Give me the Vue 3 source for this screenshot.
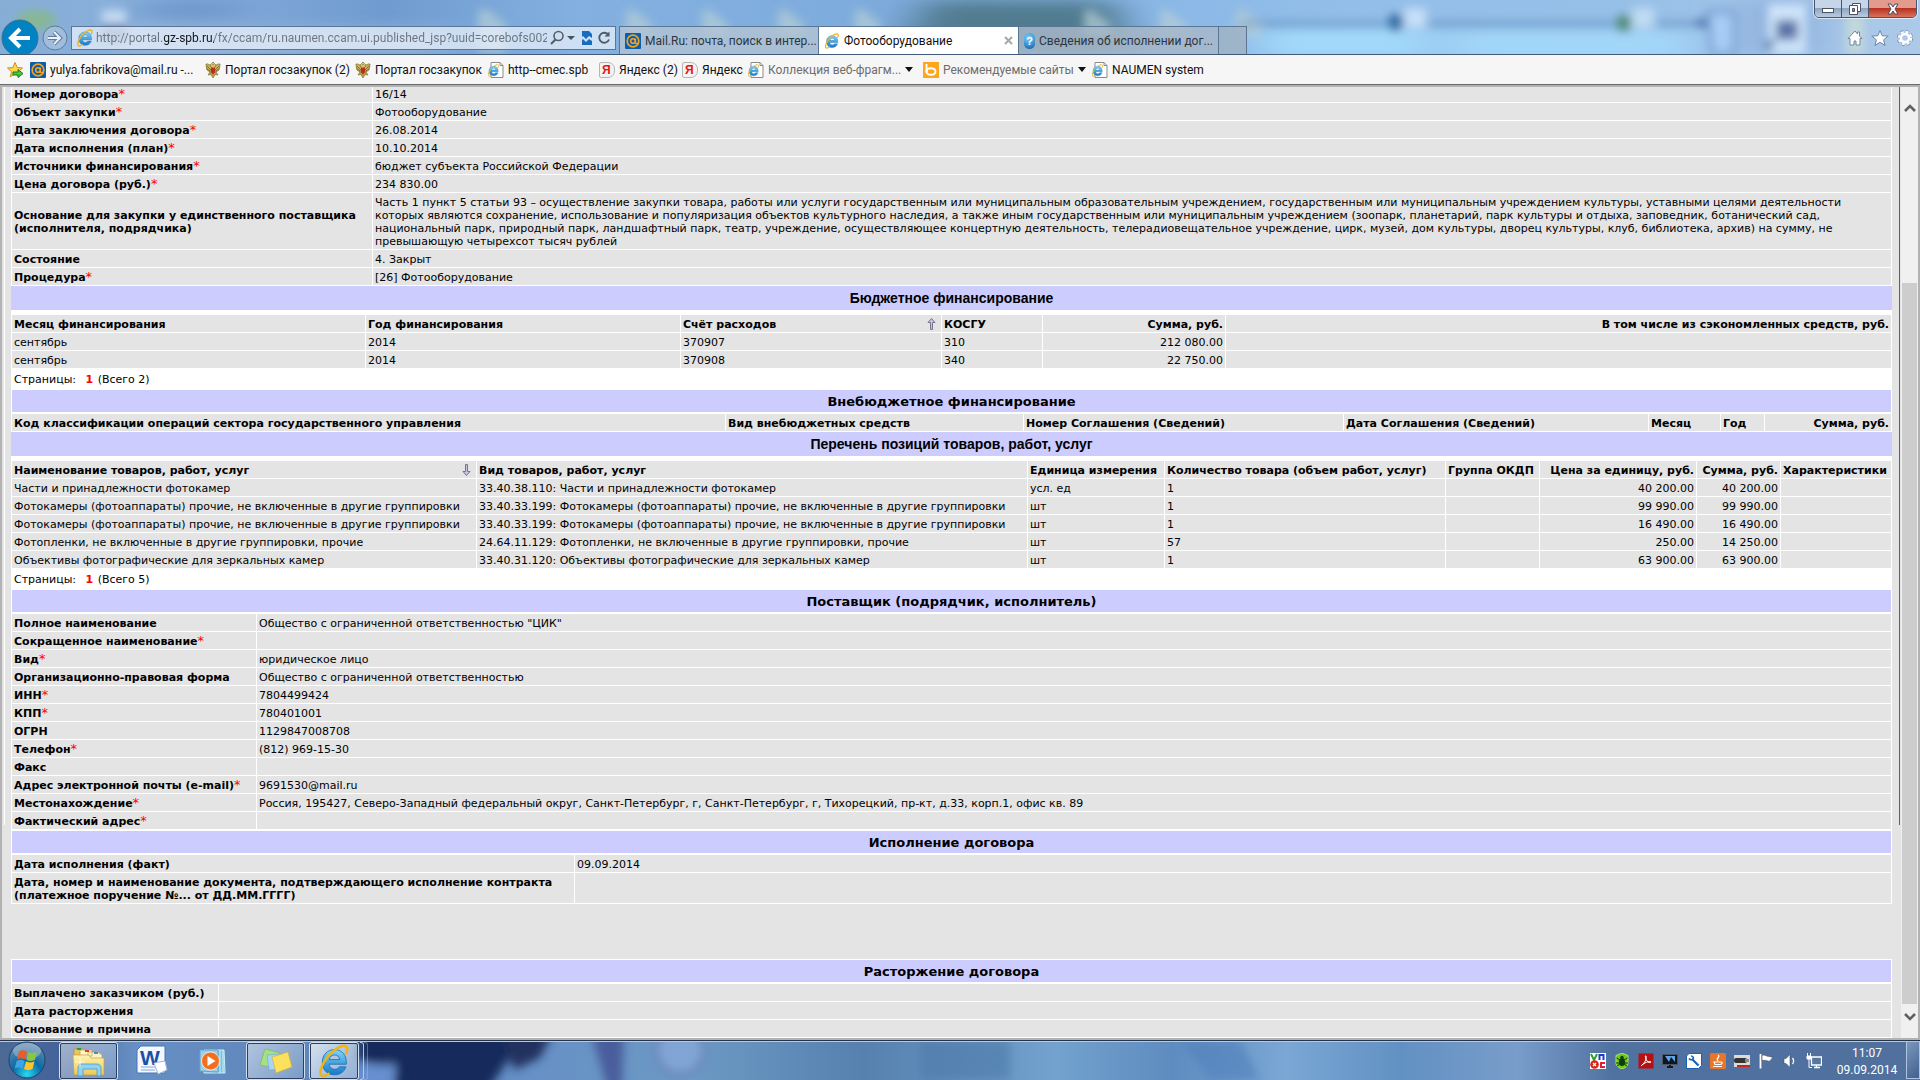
<script setup>
const url = 'http://portal.gz-spb.ru/fx/ccam/ru.naumen.ccam.ui.published_jsp?uuid=corebofs002'

const favorites = [
  { icon: 'mail', text: 'yulya.fabrikova@mail.ru -...' },
  { icon: 'crest', text: 'Портал госзакупок (2)' },
  { icon: 'crest', text: 'Портал госзакупок' },
  { icon: 'iepage', text: 'http--cmec.spb' },
  { icon: 'yandex', text: 'Яндекс (2)' },
  { icon: 'yandex', text: 'Яндекс' },
  { icon: 'iepage', text: 'Коллекция веб-фрагм...', menu: true },
  { icon: 'bing', text: 'Рекомендуемые сайты', menu: true },
  { icon: 'iepage', text: 'NAUMEN system' }
]

const contract = [
  ['Номер договора', true, '16/14'],
  ['Объект закупки', true, 'Фотооборудование'],
  ['Дата заключения договора', true, '26.08.2014'],
  ['Дата исполнения (план)', true, '10.10.2014'],
  ['Источники финансирования', true, 'бюджет субъекта Российской Федерации'],
  ['Цена договора (руб.)', true, '234 830.00'],
  ['Основание для закупки у единственного поставщика\n(исполнителя, подрядчика)', false,
    'Часть 1 пункт 5 статьи 93 – осуществление закупки товара, работы или услуги государственным или муниципальным образовательным учреждением, государственным или муниципальным учреждением культуры, уставными целями деятельности\nкоторых являются сохранение, использование и популяризация объектов культурного наследия, а также иным государственным или муниципальным учреждением (зоопарк, планетарий, парк культуры и отдыха, заповедник, ботанический сад,\nнациональный парк, природный парк, ландшафтный парк, театр, учреждение, осуществляющее концертную деятельность, телерадиовещательное учреждение, цирк, музей, дом культуры, дворец культуры, клуб, библиотека, архив) на сумму, не\nпревышающую четырехсот тысяч рублей'],
  ['Состояние', false, '4. Закрыт'],
  ['Процедура', true, '[26] Фотооборудование']
]

const budget = [
  ['сентябрь', '2014', '370907', '310', '212 080.00', ''],
  ['сентябрь', '2014', '370908', '340', '22 750.00', '']
]

const camera = 'Фотокамеры (фотоаппараты) прочие, не включенные в другие группировки'
const items = [
  ['Части и принадлежности фотокамер', '33.40.38.110: Части и принадлежности фотокамер', 'усл. ед', '1', '', '40 200.00', '40 200.00', ''],
  [camera, '33.40.33.199: ' + camera, 'шт', '1', '', '99 990.00', '99 990.00', ''],
  [camera, '33.40.33.199: ' + camera, 'шт', '1', '', '16 490.00', '16 490.00', ''],
  ['Фотопленки, не включенные в другие группировки, прочие', '24.64.11.129: Фотопленки, не включенные в другие группировки, прочие', 'шт', '57', '', '250.00', '14 250.00', ''],
  ['Объективы фотографические для зеркальных камер', '33.40.31.120: Объективы фотографические для зеркальных камер', 'шт', '1', '', '63 900.00', '63 900.00', '']
]

const supplier = [
  ['Полное наименование', false, 'Общество с ограниченной ответственностью "ЦИК"'],
  ['Сокращенное наименование', true, ''],
  ['Вид', true, 'юридическое лицо'],
  ['Организационно-правовая форма', false, 'Общество с ограниченной ответственностью'],
  ['ИНН', true, '7804499424'],
  ['КПП', true, '780401001'],
  ['ОГРН', false, '1129847008708'],
  ['Телефон', true, '(812) 969-15-30'],
  ['Факс', false, ''],
  ['Адрес электронной почты (e-mail)', true, '9691530@mail.ru'],
  ['Местонахождение', true, 'Россия, 195427, Северо-Западный федеральный округ, Санкт-Петербург, г, Санкт-Петербург, г, Тихорецкий, пр-кт, д.33, корп.1, офис кв. 89'],
  ['Фактический адрес', true, '']
]

const execution = [
  ['Дата исполнения (факт)', false, '09.09.2014'],
  ['Дата, номер и наименование документа, подтверждающего исполнение контракта\n(платежное поручение №... от ДД.ММ.ГГГГ)', false, '']
]

const termination = [
  ['Выплачено заказчиком (руб.)', false, ''],
  ['Дата расторжения', false, ''],
  ['Основание и причина', false, '']
]

const tray = ['vnc', 'spider', 'adobe', 'monitor', 'wrench', 'java', 'usb', 'flag', 'sound', 'network']
</script>

<template>
  <svg class="defs" aria-hidden="true">
    <defs>
      <linearGradient id="ieg" x1="0" y1="0" x2="0" y2="1">
        <stop offset="0" stop-color="#7fd6f7" /><stop offset="1" stop-color="#1579c8" />
      </linearGradient>
      <linearGradient id="folderg" x1="0" y1="0" x2="0" y2="1">
        <stop offset="0" stop-color="#fff3b0" /><stop offset="1" stop-color="#ecc95a" />
      </linearGradient>
      <radialGradient id="orbg" cx=".5" cy=".9" r=".9">
        <stop offset="0" stop-color="#29d8f5" /><stop offset=".45" stop-color="#0d6aa6" /><stop offset="1" stop-color="#6b8fae" />
      </radialGradient>
    </defs>
    <symbol id="ie" viewBox="0 0 32 32">
      <path d="M27.600 19H11.500c.4 3 2.300 4.800 5.200 4.800 2 0 3.500-.8 4.300-2.300h6.200C25.600 26.400 21.700 29 16.500 29 9.700 29 5 24.200 5 17.300 5 10.200 9.700 5.300 16.500 5.300c7 0 11.500 4.900 11.100 13.700zM11.600 14.700h9.700c-.3-2.800-2-4.400-4.700-4.400s-4.500 1.600-5 4.400z" fill="url(#ieg)" stroke="#1b6fb5" stroke-width=".8" />
      <path d="M27 9.500c2.200-4.200 2-7.300-.6-7.700C21.600 1 12 8 6.700 16.800 3 23 2 28.600 4.600 29.900c1.700.8 4.400-.3 7.100-2.300" fill="none" stroke="#f0b414" stroke-width="2.400" />
    </symbol>
    <symbol id="iepage" viewBox="0 0 16 16">
      <path d="M3 .5h9l3 3v12H3z" fill="#fff" stroke="#8b8b8b" /><path d="M12 .5v3h3" fill="none" stroke="#8b8b8b" />
      <use href="#ie" x="-1" y="2" width="13" height="13" />
    </symbol>
    <symbol id="mail" viewBox="0 0 16 16">
      <rect width="16" height="16" rx="1" fill="#0b5ea9" />
      <circle cx="8" cy="8" r="5.800" fill="none" stroke="#f5a11c" stroke-width="1.700" />
      <circle cx="8" cy="8" r="2.300" fill="none" stroke="#f5a11c" stroke-width="1.600" /><path d="M10.400 5.500v4c0 1.500 2.600 1.400 3 0" fill="none" stroke="#f5a11c" stroke-width="1.400" />
    </symbol>
    <symbol id="crest" viewBox="0 0 16 16">
      <path d="M7 6C6 3 3 1.500 1 2c.3 2 .2 4 1 6l3 2zM9 6c1-3 4-4.500 6-4-.3 2-.2 4-1 6l-3 2z" fill="#c9b25a" stroke="#77652a" stroke-width=".7" />
      <path d="M2 4l4 4M2 6.500l3 2.500M14 4l-4 4M14 6.500L11 9" stroke="#6a5824" stroke-width=".7" />
      <path d="M5 3l1.500-1.500L8 3l1.500-1.500L11 3 9.500 5.500h-3z" fill="#d9c46c" stroke="#77652a" stroke-width=".6" />
      <path d="M5 10l-2 3 3-.5L8 16l2-3.500 3 .5-2-3z" fill="#b89f48" stroke="#77652a" stroke-width=".6" />
      <path d="M6 6h4v4l-2 2.500L6 10z" fill="#c22a1e" /><path d="M7 0h2v1.500H7z" fill="#a8893a" />
    </symbol>
    <symbol id="bing" viewBox="0 0 16 16">
      <rect width="16" height="16" fill="#ffa61a" /><path d="M3.500 2v8.500" stroke="#fff" stroke-width="2" /><ellipse cx="8" cy="9.500" rx="4.500" ry="3.300" fill="none" stroke="#fff" stroke-width="2" />
    </symbol>
    <symbol id="favadd" viewBox="0 0 18 18">
      <path d="M9 1.500l2.200 5 5.300.5-4 3.600 1.200 5.200L9 13l-4.700 2.800 1.200-5.200-4-3.600 5.300-.5z" fill="#ffd64a" stroke="#c8921c" />
      <path d="M7 11h5V8.500l5 4-5 4V14H7z" fill="#4cc33a" stroke="#1f7c1e" />
    </symbol>
    <symbol id="vnc" viewBox="0 0 16 16">
      <rect width="16" height="16" fill="#fff" /><path d="M1 1l3 6 3-6" stroke="#29a329" stroke-width="2" fill="none" />
      <path d="M9.500 7V2h4v5" stroke="#2436d8" stroke-width="2" fill="none" /><path d="M15 10h-4v4h4" stroke="#d23" stroke-width="2" fill="none" />
      <circle cx="4.500" cy="11.500" r="4.300" fill="#d9231c" /><path d="M3 10l3 3m0-3l-3 3" stroke="#fff" stroke-width="1.200" />
    </symbol>
    <symbol id="spider" viewBox="0 0 16 16">
      <path d="M8 0l6 2.500V10c0 3-3 5-6 6-3-1-6-3-6-6V2.500z" fill="#6cc91c" stroke="#a9e66a" />
      <ellipse cx="8" cy="9" rx="3" ry="4" fill="#123c08" /><circle cx="8" cy="4.500" r="1.700" fill="#123c08" /><path d="M2.500 5L6 7m-4 3h4m-3 3l3-2m7.500-6L10 7m4 3h-4m3 3l-3-2" stroke="#123c08" />
    </symbol>
    <symbol id="adobe" viewBox="0 0 16 16">
      <rect width="15" height="15" x=".5" y=".5" fill="#b80f10" /><path d="M3 13c3-2 6-7 5-10-1-1-1 2 1 5 1.500 2 4 2 4 1s-5-.5-9 3" fill="none" stroke="#fff" />
    </symbol>
    <symbol id="monitor" viewBox="0 0 16 16">
      <rect x=".5" y="1.500" width="15" height="10" fill="#10161f" stroke="#4a5666" /><path d="M3 3l4 6 2-5 4 5V3" fill="#5fa4e6" /><path d="M5 14h6M8 12v2" stroke="#181818" stroke-width="2" />
    </symbol>
    <symbol id="wrench" viewBox="0 0 16 16">
      <path d="M3 .5h12.500v12l-3 3H.5V3z" fill="#fff" stroke="#1763b2" /><path d="M6 6l6.500 6.500" stroke="#1763b2" stroke-width="2.200" /><path d="M3 5.500A2.500 2.500 0 0 0 7.500 5 2.500 2.500 0 0 0 5 3" fill="none" stroke="#1763b2" stroke-width="1.600" />
    </symbol>
    <symbol id="java" viewBox="0 0 16 16">
      <rect width="16" height="16" rx="1.500" fill="#e8762a" /><path d="M8 2c3 2-3 3 0 6M4 9h7c2 0 1 2.500-1 2.500H5zM3 13.500h9" fill="none" stroke="#fff" stroke-width="1.200" />
    </symbol>
    <symbol id="usb" viewBox="0 0 16 16">
      <rect y="2" width="16" height="12" fill="#d8ddd9" /><rect x="0" y="5" width="13" height="5" rx="2" fill="#343434" /><rect x="11" y="6" width="4" height="3" fill="#888" /><path d="M3 13h13" stroke="#d41d1d" stroke-width="2" />
    </symbol>
    <symbol id="flag" viewBox="0 0 16 16">
      <path d="M2.500 1v14.500" stroke="#fff" stroke-width="1.800" /><path d="M4 2.500c3-1.500 4 1 6 .8 2 0 3 1.200 5 .7l-3 4c-2 .8-4-1.500-8-.5z" fill="#fff" stroke="#47525c" stroke-width=".6" />
    </symbol>
    <symbol id="sound" viewBox="0 0 16 16">
      <path d="M2 5.500h2L8 1.500v13l-4-4H2z" fill="#fff" stroke="#47525c" stroke-width=".6" /><path d="M10.500 5c1.500 2 1.500 4 0 6" fill="none" stroke="#fff" stroke-width="1.300" />
    </symbol>
    <symbol id="network" viewBox="0 0 16 16">
      <path d="M5.500 4h10v8h-10z" fill="#57789c" stroke="#fff" stroke-width="1.300" /><path d="M8 14.500h6M10.500 12v2" stroke="#fff" stroke-width="1.300" /><path d="M1.500 0v3m3-3v3M1 3h4v3H1z" fill="#fff" stroke="#fff" /><path d="M3 6v8.500h3" fill="none" stroke="#fff" />
    </symbol>
  </svg>

  <div class="window">
    <header class="chrome">
      <svg class="wall" viewBox="0 0 1920 54" preserveAspectRatio="none" aria-hidden="true">
        <defs>
          <filter id="soft" x="-20%" y="-50%" width="140%" height="200%"><feGaussianBlur stdDeviation="5" /></filter>
          <filter id="soft2" x="-50%" y="-80%" width="200%" height="260%"><feGaussianBlur stdDeviation="22 8" /></filter>
          <linearGradient id="sky" x1="0" x2="1" y1="0" y2="0">
            <stop offset="0" stop-color="#86add6" /><stop offset=".08" stop-color="#8ab0dc" /><stop offset=".2" stop-color="#6f9bd0" />
            <stop offset=".3" stop-color="#83b0e0" /><stop offset=".47" stop-color="#7dabdc" /><stop offset=".58" stop-color="#88b6e6" />
            <stop offset=".7" stop-color="#93bee9" /><stop offset=".85" stop-color="#97c0e8" /><stop offset="1" stop-color="#adc9e8" />
          </linearGradient>
        </defs>
        <rect width="1920" height="54" fill="url(#sky)" />
        <g filter="url(#soft2)">
          <path d="M925 0h190l20 54H900z" fill="#517b90" />
          <rect x="130" y="30" width="320" height="24" fill="#9ab6d9" />
          <rect x="1260" y="28" width="170" height="30" fill="#a3dafb" /><rect x="1450" y="30" width="240" height="30" fill="#a3d8fa" />
          <rect x="140" y="0" width="100" height="20" fill="#6d98cb" />
          <rect x="1740" y="0" width="80" height="54" fill="#91b2de" />
        </g>
        <g filter="url(#soft)">
          <ellipse cx="36" cy="20" rx="20" ry="10" fill="#86b794" /><rect x="102" y="10" width="24" height="14" fill="#c6dcf3" /><rect x="102" y="24" width="24" height="18" fill="#5e79ab" />
          <path d="M478 10h10l18 14v28h-28zM626 10h8l18 14v12h-26zM702 10h8l18 14v12h-26zM778 10h8l18 14v12h-26zM855 10h8l18 14v12h-26zM1084 10h8l18 14v12h-26zM1160 10h8l18 14v12h-26zM1236 10h8l18 14v12h-26z" fill="#b6cfd4" fill-opacity=".7" />
          <path d="M1240 22h460v3h-460z" fill="#4c7bae" />
          <circle cx="1396" cy="22" r="8" fill="#2f6aa3" /><rect x="1404" y="8" width="22" height="20" fill="#c6dff8" /><circle cx="1624" cy="23" r="8" fill="#4d8a76" /><rect x="1632" y="8" width="22" height="20" fill="#c0dcf2" />
          <path d="M1690 23l20-6v12z" fill="#4064a0" /><path d="M1708 12h26v42h-22z" fill="#a7cdf5" stroke="#6f98cb" stroke-width="4" />
          <path d="M1768 4h38v50h-38z" fill="#cfe5fa" /><path d="M1776 20h22v20h-22z" fill="#5c73a8" /><path d="M1766 40h10l-8 14z" fill="#36669e" /><path d="M1846 14h18v40h-18z" fill="#c2d8da" />
        </g>
      </svg>
      <nav class="navrow">
        <button class="back" aria-label="Назад">
          <svg width="38" height="38" viewBox="0 0 38 38"><circle cx="19" cy="19" r="18" fill="#0083c3" stroke="#3c6e93" /><path d="M29 19H11m8-9l-9 9 9 9" fill="none" stroke="#fff" stroke-width="4" /></svg>
        </button>
        <button class="fwd" aria-label="Вперед">
          <svg width="26" height="26" viewBox="0 0 26 26"><circle cx="13" cy="13" r="12" fill="#b9cce2" fill-opacity=".5" stroke="#5f7c9b" /><path d="M6 13h12m-6-6l6 6-6 6" fill="none" stroke="#5f7c9b" stroke-width="4" /><path d="M6 13h12m-6-6l6 6-6 6" fill="none" stroke="#e9f1f9" stroke-width="2" /></svg>
        </button>
        <div class="address">
          <svg width="18" height="18"><use href="#ie" /></svg>
          <input class="url" type="text" :value="url" aria-label="Адрес">
          <button aria-label="Поиск"><svg width="16" height="16" viewBox="0 0 16 16"><circle cx="9.500" cy="6" r="4.500" fill="none" stroke="#55606b" stroke-width="1.600" /><path d="M6.500 9.500L2 14" stroke="#55606b" stroke-width="2.200" /></svg></button>
          <button class="tiny" aria-label="Показать список"><svg width="8" height="16" viewBox="0 0 8 16"><path d="M0 6h8L4 10z" fill="#46525e" /></svg></button>
          <button class="compat" aria-label="Режим совместимости"><svg width="12" height="16" viewBox="0 0 12 16"><path d="M1 1h7l3 3v4l-3-2-3 3-3-3-1 1zM1 10l1-1 3 3 3-3 3 2v4H1z" fill="#1a6cc0" /></svg></button>
          <button aria-label="Обновить"><svg width="14" height="16" viewBox="0 0 14 16"><path d="M11.500 5A5 5 0 1 0 12 9.500" fill="none" stroke="#4d5964" stroke-width="1.800" /><path d="M12.500 1.500v5H7.500z" fill="#4d5964" /></svg></button>
        </div>
        <div class="tabs">
          <button class="tab"><svg width="16" height="16"><use href="#mail" /></svg><span>Mail.Ru: почта, поиск в интер...</span></button>
          <button class="tab active"><svg width="16" height="16"><use href="#ie" /></svg><span>Фотооборудование</span><svg class="close" width="9" height="9" viewBox="0 0 9 9"><path d="M1 1l7 7m0-7L1 8" stroke="#a8a8a8" stroke-width="2" /></svg></button>
          <button class="tab last"><i class="help">?</i><span>Сведения об исполнении дог...</span></button>
          <button class="tab new" aria-label="Новая вкладка"></button>
        </div>
        <div class="tools">
          <button aria-label="Домой"><svg width="16" height="16" viewBox="0 0 16 16"><path d="M8 1L1 8.500h2V15h4v-4h2v4h4V8.500h2L12.500 6V2h-2v2z" fill="#fff" stroke="#6f87a3" /></svg></button>
          <button aria-label="Избранное"><svg width="18" height="16" viewBox="0 0 18 16"><path d="M9 .5l2.200 5.300 6 .3-4.600 3.700 1.500 5.700L9 12.300l-5.100 3.200 1.500-5.700L.8 6.100l6-.3z" fill="#fff" stroke="#6f87a3" /></svg></button>
          <button aria-label="Сервис"><svg width="16" height="16" viewBox="0 0 16 16"><circle cx="8" cy="8" r="6" fill="none" stroke="#6f87a3" stroke-width="4" stroke-dasharray="2.700 2" /><circle cx="8" cy="8" r="6" fill="none" stroke="#fff" stroke-width="2.500" stroke-dasharray="2.700 2" /><circle cx="8" cy="8" r="4" fill="none" stroke="#fff" stroke-width="2.400" /></svg></button>
        </div>
      </nav>
      <div class="caption">
        <button aria-label="Свернуть"><svg width="12" height="12" viewBox="0 0 12 12"><rect x=".5" y="5.500" width="11" height="4" fill="#fff" stroke="#4a5364" /></svg></button>
        <button aria-label="Восстановить"><svg width="12" height="12" viewBox="0 0 12 12"><path d="M3.500.5h8v8h-8z" fill="#fff" stroke="#4a5364" /><path d="M.5 2.500h8v9h-8z" fill="#fff" stroke="#4a5364" /><path d="M3.500 5.500h2v3h-2z" fill="#8292a8" stroke="#4a5364" /></svg></button>
        <button class="x" aria-label="Закрыть"><svg width="12" height="12" viewBox="0 0 12 12"><path d="M1 1h3l2 3 2-3h3L8 6l3 5H8L6 8l-2 3H1l3-5z" fill="#fff" stroke="#4a4e5c" /></svg></button>
      </div>
    </header>

    <nav class="favbar">
      <button aria-label="Добавить в избранное"><svg width="18" height="18"><use href="#favadd" /></svg></button>
      <a v-for="(f, i) in favorites" :key="i" href="#" :class="{ dim: f.menu }">
        <i v-if="f.icon === 'yandex'" class="ya">Я</i>
        <svg v-else width="16" height="16"><use :href="'#' + f.icon" /></svg>
        <span>{{ f.text }}</span>
        <i v-if="f.menu" class="caret"></i>
      </a>
    </nav>

    <main class="view">
      <div class="page">
        <div class="sheet">
          <table class="grid contract">
            <colgroup><col class="name"><col></colgroup>
            <tbody>
              <tr v-for="r in contract" :key="r[0]"><th scope="row">{{ r[0] }}<em v-if="r[1]">*</em></th><td>{{ r[2] }}</td></tr>
            </tbody>
          </table>

          <h2 class="wide">Бюджетное финансирование</h2>
          <table class="grid budget">
            <colgroup><col class="b1"><col class="b2"><col class="b3"><col class="b4"><col class="b5"><col></colgroup>
            <thead>
              <tr>
                <th>Месяц финансирования</th><th>Год финансирования</th>
                <th><span class="sorted">Счёт расходов<svg width="9" height="12" viewBox="0 0 9 12"><path d="M4.500.5L8 4.500H5.500v7h-2v-7H1z" fill="#c6c6da" stroke="#75758f" /></svg></span></th>
                <th>КОСГУ</th><th class="num">Сумма, руб.</th><th class="num">В том числе из сэкономленных средств, руб.</th>
              </tr>
            </thead>
            <tbody>
              <tr v-for="(r, i) in budget" :key="i"><td v-for="(c, j) in r" :key="j" :class="{ num: j > 3 }">{{ c }}</td></tr>
            </tbody>
          </table>
          <p class="pager">Страницы: <b>1</b> (Всего 2)</p>

          <h2>Внебюджетное финансирование</h2>
          <table class="grid">
            <colgroup><col class="e1"><col class="e2"><col class="e3"><col class="e4"><col class="e5"><col class="e6"><col></colgroup>
            <thead>
              <tr>
                <th>Код классификации операций сектора государственного управления</th><th>Вид внебюджетных средств</th><th>Номер Соглашения (Сведений)</th>
                <th>Дата Соглашения (Сведений)</th><th>Месяц</th><th>Год</th><th class="num">Сумма, руб.</th>
              </tr>
            </thead>
          </table>

          <h2 class="wide">Перечень позиций товаров, работ, услуг</h2>
          <table class="grid">
            <colgroup><col class="i1"><col class="i2"><col class="i3"><col class="i4"><col class="i5"><col class="i6"><col class="i7"><col></colgroup>
            <thead>
              <tr>
                <th><span class="sorted">Наименование товаров, работ, услуг<svg width="9" height="12" viewBox="0 0 9 12"><path d="M4.500 11.500L8 7.500H5.500v-7h-2v7H1z" fill="#c6c6da" stroke="#75758f" /></svg></span></th>
                <th>Вид товаров, работ, услуг</th><th>Единица измерения</th><th>Количество товара (объем работ, услуг)</th><th>Группа ОКДП</th>
                <th class="num">Цена за единицу, руб.</th><th class="num">Сумма, руб.</th><th>Характеристики</th>
              </tr>
            </thead>
            <tbody>
              <tr v-for="(r, i) in items" :key="i"><td v-for="(c, j) in r" :key="j" :class="{ num: j === 5 || j === 6 }">{{ c }}</td></tr>
            </tbody>
          </table>
          <p class="pager">Страницы: <b>1</b> (Всего 5)</p>

          <h2>Поставщик (подрядчик, исполнитель)</h2>
          <table class="grid">
            <colgroup><col class="s1"><col></colgroup>
            <tbody>
              <tr v-for="r in supplier" :key="r[0]"><th scope="row">{{ r[0] }}<em v-if="r[1]">*</em></th><td>{{ r[2] }}</td></tr>
            </tbody>
          </table>

          <h2>Исполнение договора</h2>
          <table class="grid">
            <colgroup><col class="x1"><col></colgroup>
            <tbody>
              <tr v-for="r in execution" :key="r[0]"><th scope="row">{{ r[0] }}</th><td>{{ r[2] }}</td></tr>
            </tbody>
          </table>
        </div>

        <div class="sheet second">
          <h2>Расторжение договора</h2>
          <table class="grid">
            <colgroup><col class="t1"><col></colgroup>
            <tbody>
              <tr v-for="r in termination" :key="r[0]"><th scope="row">{{ r[0] }}</th><td>{{ r[2] }}</td></tr>
            </tbody>
          </table>
        </div>
      </div>
      <div class="scroll">
        <button aria-label="Вверх"><svg width="12" height="10" viewBox="0 0 12 10"><path d="M1 8l5-5 5 5" fill="none" stroke="#606060" stroke-width="2.600" /></svg></button>
        <div class="track"><div class="thumb"></div></div>
        <button aria-label="Вниз"><svg width="12" height="10" viewBox="0 0 12 10"><path d="M1 2l5 5 5-5" fill="none" stroke="#606060" stroke-width="2.600" /></svg></button>
      </div>
    </main>

    <footer class="taskbar">
      <svg class="wall" viewBox="0 0 1920 40" preserveAspectRatio="none" aria-hidden="true">
        <defs>
          <linearGradient id="bar" x1="0" x2="1" y1="0" y2="0">
            <stop offset="0" stop-color="#4d6a95" /><stop offset=".03" stop-color="#44639a" /><stop offset=".07" stop-color="#668fc4" /><stop offset=".18" stop-color="#5e84b8" />
            <stop offset=".27" stop-color="#6690c6" /><stop offset=".36" stop-color="#6c99c4" /><stop offset=".45" stop-color="#5681af" /><stop offset=".55" stop-color="#72a2cd" />
            <stop offset=".61" stop-color="#5e8cc0" /><stop offset=".67" stop-color="#7aa7d4" /><stop offset=".73" stop-color="#6191c3" /><stop offset=".79" stop-color="#799dca" /><stop offset=".84" stop-color="#5072a1" /><stop offset="1" stop-color="#50709e" />
          </linearGradient>
        </defs>
        <rect width="1920" height="40" fill="url(#bar)" />
        <g filter="url(#soft)">
          <path d="M358-10h160l-10 30-22 34h-92l2-26-38-8z" fill="#142a5c" /><path d="M356 26l40-2-6 26h-34z" fill="#688fd0" /><path d="M500-10h54l-14 28-26 12z" fill="#24305f" />
          <path d="M590-10h34l-2 60h-14z" fill="#455898" fill-opacity=".9" /><circle cx="680" cy="10" r="24" fill="#a1b8ea" fill-opacity=".4" stroke="#6278b0" stroke-opacity=".7" stroke-width="5" />
          <path d="M920 0h90v40h-90z" fill="#4d78a8" fill-opacity=".6" /><path d="M1180 0h60l20 40h-50z" fill="#4f7fba" fill-opacity=".6" />
        </g>
        <path d="M0 .5h1920" stroke="#26344a" /><path d="M0 1.500h1920" stroke="#b4cbe6" />
      </svg>
      <button class="orb" aria-label="Пуск">
        <svg width="38" height="38" viewBox="0 0 38 38"><circle cx="19" cy="19" r="18" fill="url(#orbg)" stroke="#263f63" /><ellipse cx="19" cy="10" rx="14" ry="8" fill="#fff" fill-opacity=".28" />
          <path d="M11 10.500c3-1.800 5-1.500 8 0l-2 8c-3-1.600-5-1.600-8 0z" fill="#ea5b27" /><path d="M20.500 11c3 1.500 5 1.300 8.500-.3l-2 8c-3 1.600-5.500 1.700-8.500.3z" fill="#8cc63e" /><path d="M8.600 20c3-1.600 5-1.600 8 0l-2 7.500c-3-1.500-5-1.500-8 0z" fill="#3fa4e4" /><path d="M18 20.500c3 1.500 5.500 1.400 8.500-.2l-2 7.800c-3 1.500-5 1.500-8.500 0z" fill="#fdc628" /></svg>
      </button>
      <button class="task framed" aria-label="Проводник">
        <svg width="34" height="32" viewBox="0 0 34 32"><path d="M2 4h11l2 3h9l2 2v21H2z" fill="#e9c75b" stroke="#b6913b" stroke-width=".7" /><path d="M8 5h12v6H8zM16 7h10l4 3v6H16z" fill="#fff4c4" stroke="#c39f47" stroke-width=".7" /><path d="M5 3h4v2H5z" fill="#27a02c" /><path d="M13 5h4v2h-4z" fill="#d8442e" /><path d="M22 7h4v2h-4z" fill="#3d91d8" /><path d="M1 10h16l2 3h13v17H2z" fill="url(#folderg)" stroke="#c39f47" stroke-width=".7" /><path d="M6 31v-8c0-4 3-4 5-4h13c3 0 5 1 5 4v8h-4v-7H11v7z" fill="#90d3ef" stroke="#4a9cc9" stroke-width=".8" /><path d="M8 12v10m-5-5h10" stroke="#fff" stroke-opacity=".7" /></svg>
      </button>
      <button class="task word" aria-label="Word">
        <svg width="32" height="32" viewBox="0 0 32 32"><path d="M5 1h24v27H1V5z" fill="#f4f7fc" stroke="#4574bd" /><path d="M5 22h14m-14 3h14" stroke="#8aa9d8" /><text x="4" y="20" font-family="Liberation Sans, sans-serif" font-size="21" font-weight="bold" fill="#1b50a5">W</text><path d="M18 18l11-2 2 9-9 4z" fill="#fff" stroke="#9fb6da" /></svg>
      </button>
      <button class="task media" aria-label="Проигрыватель">
        <svg width="28" height="28" viewBox="0 0 28 28"><path d="M5 3h20l1 23H5z" fill="#78c0e0" stroke="#c8ecfa" /><path d="M1 3h18v22l-18-1z" fill="#9fcee6" stroke="#60a7ca" /><path d="M21 3v23m3-23v23" stroke="#d4f1fc" /><circle cx="11.500" cy="14" r="9" fill="#f1701d" stroke="#fff" stroke-width=".7" /><path d="M8.500 9v10l8-5z" fill="#fff" /></svg>
      </button>
      <button class="task framed sticky" aria-label="Записки">
        <svg width="34" height="28" viewBox="0 0 34 28"><path d="M6 2l15 4-5 15L1 18z" fill="#a5e183" stroke="#70b45a" stroke-width=".6" /><path d="M8 8l14-1 1 15-13 1z" fill="#a8d4f6" stroke="#6ca5d2" stroke-width=".6" /><path d="M13 10l16-5 4 15-16 6z" fill="#fbe15c" stroke="#d0a92f" stroke-width=".6" /></svg>
      </button>
      <button class="task framed ie" aria-label="Internet Explorer"><svg width="34" height="34"><use href="#ie" /></svg></button>
      <span class="stack"></span><span class="stack faint"></span>
      <div class="tray">
        <svg v-for="t in tray" :key="t" width="16" height="16"><use :href="'#' + t" /></svg>
      </div>
      <time class="clock"><span>11:07</span><span>09.09.2014</span></time>
      <button class="desk" aria-label="Свернуть все окна"></button>
    </footer>
  </div>
</template>

<style>
body { margin: 0; }
</style>

<style scoped>
.defs { position: absolute; width: 0; height: 0; }
.window { height: 100vh; display: flex; flex-direction: column; overflow: hidden; font-family: Roboto, "Open Sans", sans-serif; font-size: 12px; background: #e4e4e4; }
button { border: 0; background: none; padding: 0; margin: 0; font: inherit; color: inherit; display: flex; align-items: center; justify-content: center; }
svg { display: block; flex: none; }
.wall { position: absolute; inset: 0; width: 100%; height: 100%; }

.chrome { position: relative; height: 55px; flex: none; border-bottom: 1px solid #42597a; overflow: hidden; box-sizing: border-box; }
.navrow { position: relative; display: flex; align-items: flex-start; padding-left: 1px; }
.back { margin-top: 19px; }
.fwd { margin: 25px 0 0 3px; }
.address { margin: 26px 3px 0 3px; width: 545px; height: 24px; box-sizing: border-box; border: 1px solid #5b7594; background: rgba(235, 243, 252, .72); display: flex; align-items: center; padding: 0 4px; }
.url { flex: 1; min-width: 0; margin-left: 2px; margin-right: 2px; padding: 0; border: 0; outline: 0; height: 22px; font-family: Roboto, sans-serif; font-size: 12px; background: linear-gradient(90deg, #6b747e 68px, #10161c 68px, #10161c 118px, #6b747e 118px); background-clip: text; -webkit-background-clip: text; color: transparent; }
.address .tiny { margin: 0 6px 0 2px; }
.compat { margin-right: 4px; }
.tabs { margin-top: 26px; display: flex; }
.tab { width: 200px; height: 28px; box-sizing: border-box; border: 1px solid #5b7594; border-left-width: 0; border-bottom: 0; background: rgba(180, 196, 210, .78); justify-content: flex-start; padding: 0 5px; gap: 4px; color: #2c3640; white-space: nowrap; }
.tab:first-child { border-left-width: 1px; }
.tab.active { background: #fff; color: #111; }
.tab.last { background: rgba(168, 184, 200, .82); }
.tab.new { width: 28px; background: rgba(160, 178, 194, .82); }
.tab .close { margin-left: auto; }
.help { width: 16px; height: 16px; border-radius: 8px; background: radial-gradient(circle at 40% 30%, #7fd0ff, #0560a8); color: #fff; font: bold 11px/16px "Liberation Sans", sans-serif; text-align: center; }
.tools { margin: 30px 7px 0 auto; display: flex; gap: 8px; }
.caption { position: absolute; top: -1px; right: 3px; display: flex; height: 19px; box-sizing: border-box; border: 1px solid #46566d; border-radius: 0 0 5px 5px; overflow: hidden; box-shadow: 0 0 0 1px rgba(255, 255, 255, .6); }
.caption button { width: 27px; background: linear-gradient(#c6d6e8 45%, #8fa6c0 50%, #b8cce0); border-right: 1px solid #46566d; box-sizing: border-box; }
.caption .x { width: 47px; border-right: 0; background: linear-gradient(#e29b8c 45%, #b83220 50%, #d8735c); }

.favbar { flex: none; height: 30px; box-sizing: border-box; border-bottom: 1px solid #6a6a6a; background: #f6f6f6; display: grid; grid-template-columns: 24px 175px 150px 133px 111px 83px 66px 175px 169px auto; padding-left: 6px; justify-content: start; align-items: center; }
.favbar button { justify-content: flex-start; }
.favbar a { display: flex; align-items: center; gap: 4px; color: #111; text-decoration: none; white-space: nowrap; }
.favbar a.dim { color: #6d6d6d; }
.ya { width: 16px; height: 16px; box-sizing: border-box; border: 1px solid #b5b5b5; border-radius: 2px 7px 7px 2px; background: #f3f3f3; color: #e8150f; font: bold 12px/14px "Liberation Sans", sans-serif; padding-left: 2px; }
.caret { border: 4px solid transparent; border-top: 5px solid #111; border-bottom: 0; }

.view { flex: 1; min-height: 0; display: flex; border: 2px solid #b2b2b2; box-sizing: border-box; overflow: hidden; }
.page { flex: 1; min-width: 0; position: relative; background: #e4e4e4; padding: 0 9px; overflow: hidden; font-family: "DejaVu Sans", sans-serif; font-size: 11px; line-height: 13px; color: #000; }
.page::before { content: ""; position: absolute; left: 2px; right: 1px; top: 0; height: 738px; border-left: 1px solid #fff; border-right: 1px solid #606060; }
.sheet { position: relative; background: #fff; margin-top: -3px; display: flow-root; }
.sheet.second { margin-top: 55px; }
.grid { width: 100%; table-layout: fixed; border-spacing: 1px; border-collapse: separate; }
.grid th, .grid td { background: #e4e4e4; padding: 3px 2px 1px; height: 13px; text-align: left; vertical-align: middle; white-space: pre; overflow: hidden; }
.grid th { font-weight: bold; }
.grid .num { text-align: right; }
.grid em { font-style: normal; font-weight: normal; font-size: 13px; line-height: 0; color: #f00; }
.sorted { display: flex; justify-content: space-between; height: 13px; padding-right: 3px; }
.name { width: 360px; }
.b1 { width: 353px; } .b2 { width: 314px; } .b3 { width: 260px; } .b4 { width: 100px; } .b5 { width: 182px; }
.e1 { width: 713px; } .e2 { width: 297px; } .e3 { width: 319px; } .e4 { width: 304px; } .e5 { width: 71px; } .e6 { width: 43px; }
.i1 { width: 464px; } .i2 { width: 550px; } .i3 { width: 136px; } .i4 { width: 280px; } .i5 { width: 93px; } .i6 { width: 156px; } .i7 { width: 83px; }
.s1 { width: 244px; } .x1 { width: 562px; } .t1 { width: 206px; }
h2 { margin: 1px; height: 22px; line-height: 24px; background: #ccf; text-align: center; font-size: 13px; font-weight: bold; }
h2.wide { margin: 0 0 4px; height: 24px; font-family: "Liberation Sans", sans-serif; font-size: 14px; }
.pager { margin: 0; height: 20px; line-height: 22px; padding-left: 3px; }
.pager b { color: #f00; margin: 0 1px 0 6px; }
.scroll { width: 17px; flex: none; background: #f0f0f0; display: flex; flex-direction: column; }
.scroll button { height: 42px; flex: none; }
.scroll button:last-child { height: 26px; margin-bottom: 8px; }
.track { flex: 1; padding: 154px 1px 0; display: flex; }
.thumb { flex: 1; background: #cdcdcd; }

.taskbar { position: relative; height: 40px; flex: none; display: flex; align-items: center; overflow: hidden; color: #fff; }
.taskbar > :not(.wall) { position: relative; }
.orb { margin-left: 8px; }
.task { width: 59px; height: 38px; box-sizing: border-box; margin: 1px 1px 0; }
.task.framed { border: 1px solid #d3e0ef; outline: 1px solid #2c3f5d; outline-offset: -2px; border-radius: 3px; background: linear-gradient(135deg, rgba(255, 255, 255, .5), rgba(200, 215, 235, .25)); }
.orb + .task { margin-left: 13px; }
.task.word { margin-left: 3px; }
.task.media { margin-left: 1px; }
.task.sticky { margin-left: 3px; }
.task.ie { width: 50px; margin-left: 3px; background: linear-gradient(135deg, rgba(255, 255, 255, .75), rgba(200, 220, 240, .45)); }
.stack { width: 3px; height: 36px; border: 1px solid #b9c8dd; border-left: 0; border-radius: 0 3px 3px 0; margin-top: 1px; }
.stack.faint { opacity: .4; }
.tray { margin-left: auto; margin-right: 6px; display: flex; gap: 8px; padding-top: 2px; }
.clock { width: 78px; display: flex; flex-direction: column; align-items: center; line-height: 17px; padding-top: 4px; }
.desk { width: 14px; height: 38px; box-sizing: border-box; border: 1px solid #b0c3dc; background: linear-gradient(135deg, #7b97bd, #41608e); }
</style>
